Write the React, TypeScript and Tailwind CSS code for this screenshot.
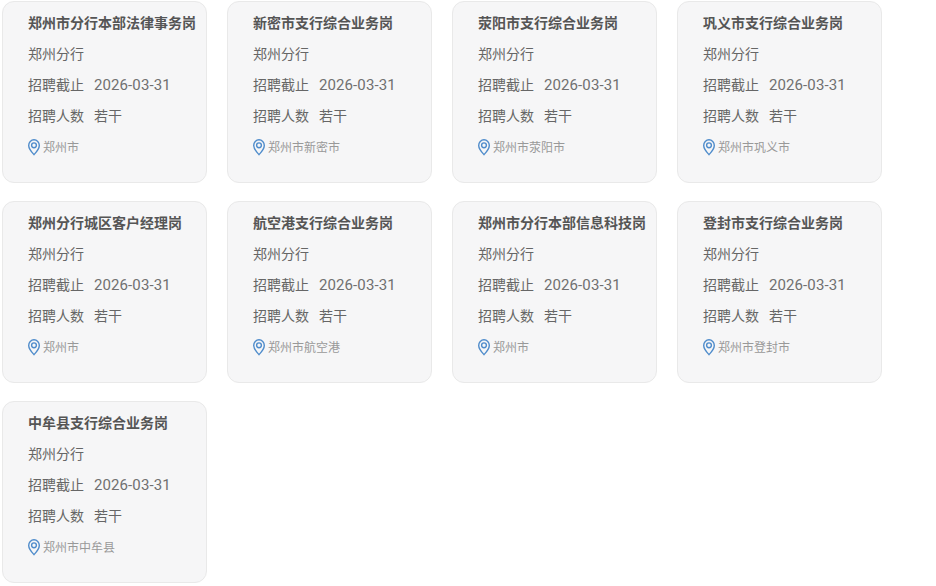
const font = "font-['Inter','Noto_Sans_CJK_SC',sans-serif]"

const jobs = [
  { title: '郑州市分行本部法律事务岗', city: '郑州市' },
  { title: '新密市支行综合业务岗', city: '郑州市新密市' },
  { title: '荥阳市支行综合业务岗', city: '郑州市荥阳市' },
  { title: '巩义市支行综合业务岗', city: '郑州市巩义市' },
  { title: '郑州分行城区客户经理岗', city: '郑州市' },
  { title: '航空港支行综合业务岗', city: '郑州市航空港' },
  { title: '郑州市分行本部信息科技岗', city: '郑州市' },
  { title: '登封市支行综合业务岗', city: '郑州市登封市' },
  { title: '中牟县支行综合业务岗', city: '郑州市中牟县' },
]

function Pin() {
  return (
    <svg width="15" height="17" viewBox="0 0 15 17" fill="none" stroke="#4f8ccb" strokeWidth="1.4" className="shrink-0">
      <path d="M6 15.6 C3.6 13 0.7 9.8 0.7 6.4 A5.3 5.6 0 0 1 11.3 6.4 C11.3 9.8 8.4 13 6 15.6 Z" />
      <circle cx="6" cy="6.3" r="2.4" />
    </svg>
  )
}

function JobCard({ title, city }: { title: string; city: string }) {
  return (
    <div className="w-[205px] h-[182px] rounded-xl border border-[#e9e9e9] bg-[#f6f6f7] pl-[25px] pt-[5px] whitespace-nowrap">
      <div className="h-[31px] leading-[31px] text-sm font-bold text-[#555555]">{title}</div>
      <div className="h-[31px] leading-[31px] text-sm text-[#666666]">郑州分行</div>
      <div className="h-[31px] leading-[31px] text-sm text-[#666666] flex items-baseline gap-[10px]">
        <span>招聘截止</span>
        <span className="font-['Roboto','Noto_Sans_CJK_SC',sans-serif] text-[15px] tracking-[0.1px] text-[#707070]">2026-03-31</span>
      </div>
      <div className="h-[31px] leading-[31px] text-sm text-[#666666] flex gap-[10px]">
        <span>招聘人数</span>
        <span>若干</span>
      </div>
      <div className="h-[33px] flex items-center text-xs text-[#999999]">
        <Pin />
        <span>{city}</span>
      </div>
    </div>
  )
}

export default function App() {
  return (
    <div className={`w-[936px] h-[586px] bg-white overflow-hidden pl-[2px] pt-[1px] ${font}`}>
      <div className="grid grid-cols-[repeat(4,205px)] gap-x-5 gap-y-[18px]">
        {jobs.map((job) => (
          <JobCard key={job.title} title={job.title} city={job.city} />
        ))}
      </div>
    </div>
  )
}
